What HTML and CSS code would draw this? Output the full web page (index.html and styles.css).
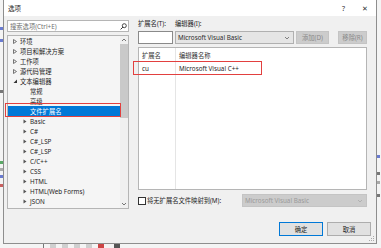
FILE: index.html
```html
<!DOCTYPE html>
<html lang="zh-CN">
<head>
    <meta charset="UTF-8">
    <title>选项</title>
    <link rel="stylesheet" href="styles.css">
</head>
<body>
    <div class="desk">
        <div class="gutter">
            <i class="bit blue" style="margin-top:27px"></i>
            <i class="bit blue" style="margin-top:9px"></i>
            <i class="bit dark" style="margin-top:48px"></i>
            <i class="bit green" style="margin-top:68px"></i>
            <i class="bit grey" style="margin-top:4px"></i>
            <i class="bit blue" style="margin-top:4px"></i>
            <i class="bit red" style="margin-top:6px"></i>
        </div>

        <div class="dialog">
            <div class="titlebar">
                <span class="title">选项</span>
                <span class="help">?</span>
                <span class="close">✕</span>
            </div>

            <div class="main">
                <div class="left">
                    <div class="search">
                        <span class="placeholder">搜索选项(Ctrl+E)</span>
                        <svg class="lens" width="7" height="7" viewBox="0 0 7 7">
                            <circle cx="4.3" cy="2.7" r="2" fill="none" stroke="#333" stroke-width="0.9"/>
                            <line x1="2.9" y1="4.1" x2="0.6" y2="6.4" stroke="#333" stroke-width="1"/>
                        </svg>
                    </div>

                    <div class="tree">
                        <ul class="nodes">
                            <li class="lv1"><svg class="arr" width="4" height="5" viewBox="0 0 4 5"><polygon points="0.5,0.5 3.5,2.5 0.5,4.5" fill="none" stroke="#555" stroke-width="0.8"/></svg>环境</li>
                            <li class="lv1"><svg class="arr" width="4" height="5" viewBox="0 0 4 5"><polygon points="0.5,0.5 3.5,2.5 0.5,4.5" fill="none" stroke="#555" stroke-width="0.8"/></svg>项目和解决方案</li>
                            <li class="lv1"><svg class="arr" width="4" height="5" viewBox="0 0 4 5"><polygon points="0.5,0.5 3.5,2.5 0.5,4.5" fill="none" stroke="#555" stroke-width="0.8"/></svg>工作项</li>
                            <li class="lv1"><svg class="arr" width="4" height="5" viewBox="0 0 4 5"><polygon points="0.5,0.5 3.5,2.5 0.5,4.5" fill="none" stroke="#555" stroke-width="0.8"/></svg>源代码管理</li>
                            <li class="lv1"><svg class="arr" width="4" height="5" viewBox="0 0 4 5"><polygon points="4,0.5 4,4 0.5,4" fill="#333"/></svg>文本编辑器</li>
                            <li class="lv2 leaf">常规</li>
                            <li class="lv2 leaf">高级</li>
                            <li class="lv2 leaf selected">文件扩展名</li>
                            <li class="lv2"><svg class="arr" width="4" height="5" viewBox="0 0 4 5"><polygon points="0.5,0.5 3.5,2.5 0.5,4.5" fill="#555"/></svg>Basic</li>
                            <li class="lv2"><svg class="arr" width="4" height="5" viewBox="0 0 4 5"><polygon points="0.5,0.5 3.5,2.5 0.5,4.5" fill="#555"/></svg>C#</li>
                            <li class="lv2"><svg class="arr" width="4" height="5" viewBox="0 0 4 5"><polygon points="0.5,0.5 3.5,2.5 0.5,4.5" fill="#555"/></svg>C#_LSP</li>
                            <li class="lv2"><svg class="arr" width="4" height="5" viewBox="0 0 4 5"><polygon points="0.5,0.5 3.5,2.5 0.5,4.5" fill="#555"/></svg>C#_LSP</li>
                            <li class="lv2"><svg class="arr" width="4" height="5" viewBox="0 0 4 5"><polygon points="0.5,0.5 3.5,2.5 0.5,4.5" fill="#555"/></svg>C/C++</li>
                            <li class="lv2"><svg class="arr" width="4" height="5" viewBox="0 0 4 5"><polygon points="0.5,0.5 3.5,2.5 0.5,4.5" fill="#555"/></svg>CSS</li>
                            <li class="lv2"><svg class="arr" width="4" height="5" viewBox="0 0 4 5"><polygon points="0.5,0.5 3.5,2.5 0.5,4.5" fill="#555"/></svg>HTML</li>
                            <li class="lv2"><svg class="arr" width="4" height="5" viewBox="0 0 4 5"><polygon points="0.5,0.5 3.5,2.5 0.5,4.5" fill="#555"/></svg>HTML(Web Forms)</li>
                            <li class="lv2"><svg class="arr" width="4" height="5" viewBox="0 0 4 5"><polygon points="0.5,0.5 3.5,2.5 0.5,4.5" fill="#555"/></svg>JSON</li>
                        </ul>
                        <div class="scrollbar">
                            <svg class="sb-arrow" width="8" height="8" viewBox="0 0 8 8"><polyline points="2,5 4,3 6,5" fill="none" stroke="#555" stroke-width="0.8"/></svg>
                            <div class="thumb"></div>
                            <div class="track"></div>
                            <svg class="sb-arrow" width="8" height="8" viewBox="0 0 8 8"><polyline points="2,3 4,5 6,3" fill="none" stroke="#555" stroke-width="0.8"/></svg>
                        </div>
                        <div class="mark mark-tree"></div>
                    </div>
                </div>

                <div class="right">
                    <div class="labels">
                        <span class="lab-ext">扩展名(T):</span>
                        <span>编辑器(I):</span>
                    </div>
                    <div class="controls">
                        <div class="textbox"></div>
                        <div class="combo">
                            <span>Microsoft Visual Basic</span>
                            <svg width="6" height="4" viewBox="0 0 6 4"><polyline points="1,1 3,3 5,1" fill="none" stroke="#666" stroke-width="0.8"/></svg>
                        </div>
                        <div class="btn btn-add">添加(D)</div>
                        <div class="btn btn-remove">移除(R)</div>
                    </div>
                    <div class="list">
                        <div class="list-head">
                            <span class="col-ext">扩展名</span>
                            <span class="col-name">编辑器名称</span>
                        </div>
                        <div class="list-row">
                            <span class="col-ext">cu</span>
                            <span class="col-name">Microsoft Visual C++</span>
                        </div>
                        <div class="col-line"></div>
                        <div class="mark mark-row"></div>
                    </div>
                    <div class="map-row">
                        <span class="check"></span>
                        <span class="map-label">将无扩展名文件映射到(M):</span>
                        <div class="combo combo-off">
                            <span>Microsoft Visual Basic</span>
                            <svg width="6" height="4" viewBox="0 0 6 4"><polyline points="1,1 3,3 5,1" fill="none" stroke="#aaa" stroke-width="0.8"/></svg>
                        </div>
                    </div>
                </div>
            </div>

            <div class="footer">
                <div class="btn btn-ok">确定</div>
                <div class="btn btn-cancel">取消</div>
            </div>

            <svg class="grip" width="5" height="5" viewBox="0 0 5 5">
                <rect x="4" y="0" width="1" height="1" fill="#aaa"/>
                <rect x="2" y="2" width="1" height="1" fill="#aaa"/>
                <rect x="4" y="2" width="1" height="1" fill="#aaa"/>
                <rect x="0" y="4" width="1" height="1" fill="#aaa"/>
                <rect x="2" y="4" width="1" height="1" fill="#aaa"/>
                <rect x="4" y="4" width="1" height="1" fill="#aaa"/>
            </svg>
        </div>

        <div class="gutter gutter-right">
            <i class="bit blue" style="margin-top:155px"></i>
            <i class="bit dark" style="margin-top:14px"></i>
            <i class="bit grey" style="margin-top:6px"></i>
            <i class="bit dark" style="margin-top:10px"></i>
        </div>
    </div>

    <div class="toolbar">
        <i class="tool" style="margin-left:43px;background:#777;width:1px"></i>
        <i class="tool" style="margin-left:6px"></i>
        <i class="tool" style="margin-left:6px"></i>
        <i class="tool" style="margin-left:6px"></i>
        <i class="tool" style="margin-left:6px"></i>
        <i class="tool" style="margin-left:6px;background:#c44"></i>
        <i class="tool" style="margin-left:10px;background:#555"></i>
    </div>
</body>
</html>
```

FILE: styles.css
```css
body {
    margin: 0;
    width: 381px;
    height: 248px;
    overflow: hidden;
    background: #f4f4f4;
    font-family: "Noto Sans", "Noto Sans CJK SC", sans-serif;
    font-size: 6.3px;
    color: #1e1e1e;
}
.desk {
    display: flex;
    height: 244px;
}
.gutter {
    width: 3px;
    display: flex;
    flex-direction: column;
}
.gutter-right {
    width: 4px;
}
.bit {
    display: block;
    height: 3px;
    width: 3px;
}
.bit.blue { background: #6a7bd0; }
.bit.dark { background: #777; }
.bit.green { background: #5aa866; }
.bit.grey { background: #aaa; }
.bit.red { background: #c86060; }

.dialog {
    box-sizing: border-box;
    width: 374px;
    height: 244px;
    border: 1px solid #8e8e8e;
    border-top: 0;
    background: #f0f0f0;
    display: flex;
    flex-direction: column;
    position: relative;
}
.titlebar {
    height: 16px;
    background: #fff;
    display: flex;
    align-items: center;
    padding-left: 4px;
}
.title {
    flex: 1;
    font-size: 6.5px;
}
.help {
    font-size: 7px;
    color: #333;
    margin-right: 17px;
}
.close {
    font-size: 7px;
    color: #333;
    margin-right: 8px;
}

.main {
    display: flex;
    padding: 4px 0 0 3px;
}
.left {
    width: 122px;
    display: flex;
    flex-direction: column;
    gap: 3px;
}
.search {
    box-sizing: border-box;
    height: 12px;
    background: #fff;
    border: 1px solid #b5b5b5;
    display: flex;
    align-items: center;
    justify-content: space-between;
    padding: 0 1px 0 2px;
}
.placeholder {
    color: #707070;
}
.tree {
    box-sizing: border-box;
    position: relative;
    height: 174px;
    background: #f5f5f5;
    border: 1px solid #b5b5b5;
    display: flex;
}
.nodes {
    list-style: none;
    margin: 0;
    padding: 0;
    flex: 1;
}
.nodes li {
    height: 10px;
    display: flex;
    align-items: center;
    white-space: nowrap;
}
.arr {
    margin-right: 3px;
}
.lv1 {
    padding-left: 5px;
}
.lv2 {
    padding-left: 15px;
}
.lv2.leaf {
    padding-left: 22px;
}
.selected {
    background: #0078d7;
    color: #fff;
}
.scrollbar {
    width: 8px;
    display: flex;
    flex-direction: column;
    background: #f0f0f0;
}
.thumb {
    height: 74px;
    background: #c9c9c9;
}
.track {
    flex: 1;
}
.mark {
    position: absolute;
    border: 1.5px solid #e2403f;
}
.mark-tree {
    left: -3px;
    top: 67px;
    width: 114px;
    height: 12px;
}

.right {
    width: 229px;
    margin-left: 9px;
    display: flex;
    flex-direction: column;
}
.labels {
    height: 11px;
    line-height: 8px;
    display: flex;
}
.lab-ext {
    width: 37px;
}
.controls {
    height: 13px;
    display: flex;
    gap: 2px;
}
.textbox {
    width: 35px;
    background: #fff;
    border: 1px solid #8a8a8a;
    box-sizing: border-box;
}
.combo {
    box-sizing: border-box;
    width: 119px;
    background: #e5e5e5;
    border: 1px solid #b0b0b0;
    display: flex;
    align-items: center;
    justify-content: space-between;
    padding: 0 3px 0 2px;
    color: #2a2a2a;
}
.btn {
    box-sizing: border-box;
    display: flex;
    align-items: center;
    justify-content: center;
    background: #cccccc;
    color: #8a8a8a;
    border: 1px solid #c4c4c4;
}
.btn-add {
    width: 33px;
}
.btn-remove {
    width: 29px;
    margin-left: 7px;
}
.list {
    box-sizing: border-box;
    position: relative;
    margin-top: 3px;
    height: 143px;
    background: #fff;
    border: 1px solid #b5b5b5;
}
.list-head, .list-row {
    display: flex;
    align-items: center;
}
.list-head {
    height: 14px;
    color: #333;
}
.list-row {
    height: 12px;
}
.col-ext {
    width: 37px;
    padding-left: 3px;
    box-sizing: border-box;
}
.col-name {
    padding-left: 3px;
}
.col-line {
    position: absolute;
    left: 36px;
    top: 0;
    bottom: 0;
    width: 1px;
    background: #e5e5e5;
}
.mark-row {
    left: -6px;
    top: 13px;
    width: 127px;
    height: 12px;
}
.map-row {
    margin-top: 4px;
    height: 13px;
    display: flex;
    align-items: center;
}
.check {
    box-sizing: border-box;
    width: 8px;
    height: 8px;
    background: #fff;
    border: 1px solid #333;
    margin-right: 1px;
}
.map-label {
    flex: 1;
}
.combo-off {
    width: 125px;
    height: 13px;
    background: #cccccc;
    border-color: #c4c4c4;
    color: #9a9a9a;
}

.footer {
    margin-top: 13px;
    display: flex;
    justify-content: flex-end;
    gap: 4px;
    padding-right: 5px;
}
.btn-ok, .btn-cancel {
    width: 44px;
    height: 14px;
    background: #e1e1e1;
    color: #1e1e1e;
    border-color: #adadad;
}
.btn-ok {
    border: 1.5px solid #0078d7;
}
.grip {
    position: absolute;
    right: 2px;
    bottom: 2px;
}

.toolbar {
    height: 4px;
    display: flex;
    background: #f4f4f4;
}
.tool {
    display: block;
    width: 6px;
    height: 4px;
    background: #cfcfcf;
}
```
